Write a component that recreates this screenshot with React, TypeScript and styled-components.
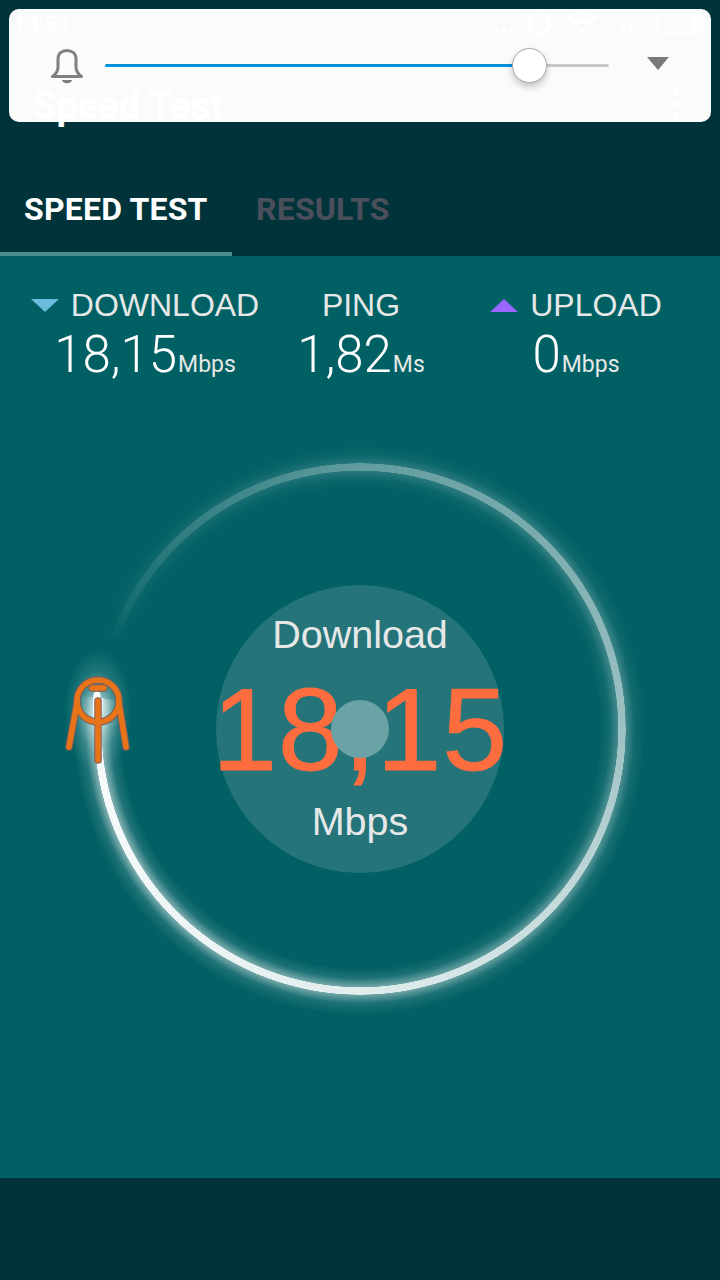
import React from 'react';
import styled, { createGlobalStyle } from 'styled-components';

const GlobalStyle = createGlobalStyle`
    html, body {
        margin: 0;
        padding: 0;
        background: #00343a;
    }
`;

const Screen = styled.div`
    position: relative;
    width: 720px;
    height: 1280px;
    overflow: hidden;
    display: flex;
    flex-direction: column;
    background: #00343a;
    font-family: Roboto, "Liberation Sans", sans-serif;
`;

const StatusBar = styled.div`
    height: 48px;
    padding: 10px 12px 0 14px;
    box-sizing: border-box;
    display: flex;
    justify-content: space-between;
    color: #fff;
    font-size: 22px;
    font-weight: 500;
    line-height: 29px;
`;

const StatusIcons = styled.svg`
    display: block;
`;

const AppBar = styled.div`
    height: 88px;
    padding: 28px 40px 0 33px;
    box-sizing: border-box;
    display: flex;
    justify-content: space-between;
    align-items: flex-start;
    color: #fff;
    font-size: 38px;
    font-weight: 700;
    line-height: 60px;
`;

const Menu = styled.div`
    display: flex;
    flex-direction: column;
    gap: 5px;
    padding-top: 12px;
`;

const MenuDot = styled.div`
    width: 7px;
    height: 7px;
    border-radius: 50%;
    background: #fff;
`;

const Tabs = styled.div`
    height: 120px;
    display: flex;
    align-items: stretch;
`;

const Tab = styled.div<{ $active?: boolean }>`
    width: ${p => (p.$active ? '232px' : 'auto')};
    padding-left: ${p => (p.$active ? '24px' : '24px')};
    box-sizing: border-box;
    color: ${p => (p.$active ? '#fff' : '#4b4f5b')};
    font-size: 32px;
    font-weight: 700;
    letter-spacing: 0.2px;
    line-height: 146px;
    white-space: nowrap;
    border-bottom: 4px solid ${p => (p.$active ? '#4a8e92' : 'transparent')};
`;

const Body = styled.div`
    flex: 1;
    background: #006064;
    display: flex;
    flex-direction: column;
`;

const Stats = styled.div`
    height: 140px;
    display: grid;
    grid-template-columns: 290px 142px 288px;
    padding-top: 31px;
    box-sizing: border-box;
`;

const Stat = styled.div`
    display: flex;
    flex-direction: column;
    align-items: center;
    color: #e6e8e8;
`;

const StatLabel = styled.div`
    display: flex;
    align-items: center;
    gap: 12px;
    font-family: "Liberation Sans", sans-serif;
    font-size: 32px;
    line-height: 36px;
`;

const Arrow = styled.div<{ $up?: boolean; $color: string }>`
    width: 0;
    height: 0;
    border-left: 14px solid transparent;
    border-right: 14px solid transparent;
    ${p => (p.$up ? `border-bottom: 13px solid ${p.$color};` : `border-top: 13px solid ${p.$color};`)}
`;

const StatValue = styled.div`
    display: flex;
    align-items: baseline;
    margin-top: 2px;
    color: #fff;
    font-family: Roboto, sans-serif;
    font-size: 51px;
    font-weight: 300;
    line-height: 60px;
`;

const StatUnit = styled.span`
    color: #e6e8e8;
    font-size: 23px;
    font-weight: 400;
    margin-left: 1px;
`;

const GaugeArea = styled.div`
    flex: 1;
    display: flex;
    justify-content: center;
    padding-top: 13px;
`;

const Gauge = styled.div`
    position: relative;
    width: 640px;
    height: 640px;
`;

// white whose strength falls away from the needle, back round to the top left
const sweep = `conic-gradient(
    rgba(255, 255, 255, 0.28) 0deg,
    rgba(255, 255, 255, 0.36) 45deg,
    rgba(255, 255, 255, 0.48) 90deg,
    rgba(255, 255, 255, 0.66) 135deg,
    rgba(255, 255, 255, 0.8) 180deg,
    rgba(255, 255, 255, 0.88) 225deg,
    rgba(255, 255, 255, 0.96) 276.5deg,
    rgba(255, 255, 255, 0) 277deg,
    rgba(255, 255, 255, 0) 288deg,
    rgba(255, 255, 255, 0.06) 298deg,
    rgba(255, 255, 255, 0.12) 315deg,
    rgba(255, 255, 255, 0.2) 340deg,
    rgba(255, 255, 255, 0.28) 360deg
)`;

const RingGlow = styled.div`
    position: absolute;
    left: 20px;
    top: 20px;
    width: 600px;
    height: 600px;
    border-radius: 50%;
    background: ${sweep};
    mask-image: radial-gradient(
        closest-side,
        transparent 79.5%,
        rgba(0, 0, 0, 0.14) 83%,
        rgba(0, 0, 0, 0.55) 86%,
        rgba(0, 0, 0, 0.55) 88.6%,
        rgba(0, 0, 0, 0.14) 91.5%,
        transparent 95.5%
    );
`;

const Ring = styled.div`
    position: absolute;
    left: 54px;
    top: 54px;
    width: 532px;
    height: 532px;
    border-radius: 50%;
    background: ${sweep};
    mask-image: radial-gradient(
        closest-side,
        transparent calc(100% - 8px),
        #000 calc(100% - 7.5px),
        #000 calc(100% - 0.5px),
        transparent 100%
    );
`;

const NeedleSvg = styled.svg`
    position: absolute;
    left: 0;
    top: 240px;
    display: block;
`;

const Readout = styled.div`
    position: absolute;
    left: 176px;
    top: 176px;
    width: 288px;
    height: 288px;
    border-radius: 50%;
    background: #257479;
    display: flex;
    flex-direction: column;
    align-items: center;
    color: #e6e8e8;
    font-family: "Liberation Sans", sans-serif;
    font-size: 39.5px;
`;

const ReadoutLabel = styled.div`
    margin-top: 25px;
    line-height: 48px;
`;

const ReadoutValue = styled.div`
    color: #ff6d3f;
    font-size: 117px;
    letter-spacing: 0.6px;
    -webkit-text-stroke: 0.8px #ff6d3f;
    line-height: 120px;
    margin-top: 12px;
    white-space: nowrap;
`;

const ReadoutUnit = styled.div`
    line-height: 48px;
    margin-top: 7px;
`;

const Hub = styled.div`
    position: absolute;
    left: 115px;
    top: 115px;
    width: 58px;
    height: 58px;
    border-radius: 50%;
    background: #69a3a5;
`;

const Footer = styled.div`
    height: 102px;
    background: #00343a;
`;

const VolumePanel = styled.div`
    position: absolute;
    left: 9px;
    top: 9px;
    width: 702px;
    height: 113px;
    border-radius: 10px;
    background: rgba(255, 255, 255, 0.98);
    display: flex;
    align-items: center;
    box-sizing: border-box;
    padding-left: 36px;
`;

const BellIcon = styled.svg`
    display: block;
    flex: none;
`;

const Slider = styled.div`
    position: relative;
    width: 504px;
    height: 3px;
    margin-left: 16px;
    background: #c9c9c9;
    border-radius: 2px;
`;

const SliderFill = styled.div`
    height: 100%;
    background: #0090dc;
    border-radius: 2px;
`;

const Thumb = styled.div`
    position: absolute;
    top: -16px;
    width: 35px;
    height: 35px;
    margin-left: -17px;
    border-radius: 50%;
    background: #fff;
    border: 1px solid #a8a8a8;
    box-sizing: border-box;
    box-shadow: 0 4px 7px rgba(0, 0, 0, 0.22);
`;

const Caret = styled.div`
    width: 0;
    height: 0;
    margin: -4px 0 0 38px;
    border-left: 11px solid transparent;
    border-right: 11px solid transparent;
    border-top: 13px solid #7a7a7a;
`;

const needlePath = 'M37 54 L29 98 M79 54 L86 98 M58 52 L58 111 M52 39 L64 39';

function Needle() {
    return (
        <NeedleSvg width="120" height="130" viewBox="0 0 120 130">
            <defs>
                <radialGradient id="headGlow">
                    <stop offset="0" stopColor="#fff" stopOpacity="0.85" />
                    <stop offset="0.3" stopColor="#d5eeee" stopOpacity="0.55" />
                    <stop offset="0.65" stopColor="#a5d8d8" stopOpacity="0.18" />
                    <stop offset="1" stopColor="#a5d8d8" stopOpacity="0" />
                </radialGradient>
            </defs>
            <ellipse cx="58" cy="62" rx="34" ry="62" fill="url(#headGlow)" />
            <path d="M57 46 Q56 56 57 70" fill="none" stroke="#fff" strokeWidth="7" strokeLinecap="round" />
            <g fill="none" stroke="#7a5c5c" strokeWidth="7.5" strokeLinecap="round">
                <circle cx="58" cy="52" r="21" />
                <path d={needlePath} />
            </g>
            <g fill="none" stroke="#e8741a" strokeWidth="5.5" strokeLinecap="round">
                <circle cx="58" cy="52" r="21" />
                <path d={needlePath} />
            </g>
        </NeedleSvg>
    );
}

function App() {
    return (
        <Screen>
            <GlobalStyle />
            <StatusBar>
                <span>14:53</span>
                <StatusIcons width="220" height="36" viewBox="0 0 220 36">
                    <g fill="#fff">
                        <circle cx="8" cy="21" r="2.5" />
                        <circle cx="16" cy="21" r="2.5" />
                        <circle cx="24" cy="21" r="2.5" />
                        <circle cx="94" cy="21" r="3" />
                        <path d="M125 24h4v-4h-4zM133 24h4v-8h-4zM141 24h3v-13h-3z" />
                        <path d="M148 24h2v-18h-2z" opacity="0.5" />
                        <rect x="203" y="7" width="12" height="13" rx="4" />
                    </g>
                    <g fill="none" stroke="#fff" strokeWidth="3">
                        <circle cx="51" cy="14" r="10" />
                        <path d="M51 9v6l4 2M41 3l-4 4M61 3l4 4" strokeWidth="2.5" />
                        <path d="M80 9a20 20 0 0 1 28 0M85 15a13 13 0 0 1 18 0" strokeWidth="4" />
                        <rect x="167.5" y="5.5" width="51" height="17" rx="8" strokeWidth="2.5" />
                    </g>
                </StatusIcons>
            </StatusBar>
            <AppBar>
                <span>Speed Test</span>
                <Menu>
                    <MenuDot />
                    <MenuDot />
                    <MenuDot />
                </Menu>
            </AppBar>
            <Tabs>
                <Tab $active>SPEED TEST</Tab>
                <Tab>RESULTS</Tab>
            </Tabs>
            <Body>
                <Stats>
                    <Stat>
                        <StatLabel>
                            <Arrow $color="#6bbcdc" />
                            DOWNLOAD
                        </StatLabel>
                        <StatValue>
                            18,15<StatUnit>Mbps</StatUnit>
                        </StatValue>
                    </Stat>
                    <Stat>
                        <StatLabel>PING</StatLabel>
                        <StatValue>
                            1,82<StatUnit>Ms</StatUnit>
                        </StatValue>
                    </Stat>
                    <Stat>
                        <StatLabel>
                            <Arrow $up $color="#9966ff" />
                            UPLOAD
                        </StatLabel>
                        <StatValue>
                            0<StatUnit>Mbps</StatUnit>
                        </StatValue>
                    </Stat>
                </Stats>
                <GaugeArea>
                    <Gauge>
                        <RingGlow />
                        <Ring />
                        <Needle />
                        <Readout>
                            <ReadoutLabel>Download</ReadoutLabel>
                            <ReadoutValue>18,15</ReadoutValue>
                            <ReadoutUnit>Mbps</ReadoutUnit>
                            <Hub />
                        </Readout>
                    </Gauge>
                </GaugeArea>
            </Body>
            <Footer />
            <VolumePanel>
                <BellIcon width="44" height="44" viewBox="0 0 44 44">
                    <path
                        d="M7.5 32.5C11 30 13 27 13 23V15C13 9.5 17 6.5 22 6.5S31 9.5 31 15V23C31 27 33 30 36.5 32.5Z"
                        fill="none"
                        stroke="#808080"
                        strokeWidth="3"
                        strokeLinejoin="round"
                    />
                    <path d="M17 36h10a5 3.2 0 0 1-10 0z" fill="#808080" />
                </BellIcon>
                <Slider>
                    <SliderFill style={{ width: `${(424 / 504) * 100}%` }} />
                    <Thumb style={{ left: `${(424 / 504) * 100}%` }} />
                </Slider>
                <Caret />
            </VolumePanel>
        </Screen>
    );
}

export default App;
